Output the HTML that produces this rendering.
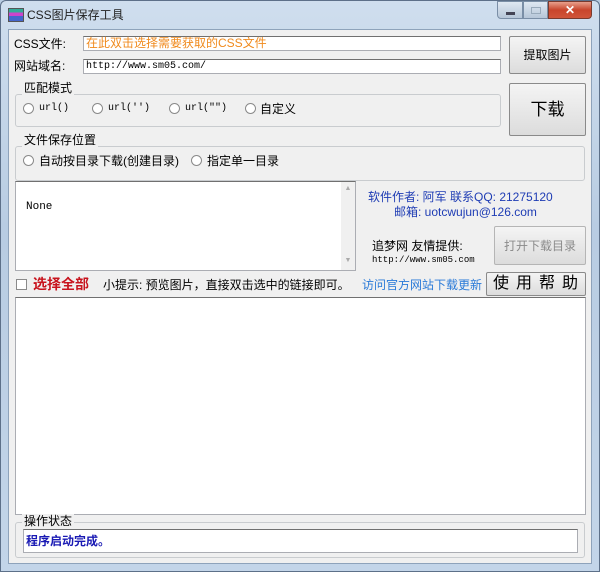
<!DOCTYPE html>
<html><head><meta charset="utf-8"><style>
*{margin:0;padding:0;box-sizing:border-box}
body{width:600px;height:572px;position:relative;overflow:hidden;font-family:"Liberation Sans","Noto Sans CJK SC",sans-serif;font-size:12px;color:#000;background:#b9cde3}
.a{position:absolute;line-height:14px}
.frame{left:0;top:0;width:600px;height:572px;background:linear-gradient(#cfdeee,#b8cce2 40%,#c3d5e9);border-radius:6px 6px 0 0;border:1px solid #5d7089}
.client{left:8px;top:29px;width:584px;height:535px;background:#f0f0f0;border:1px solid #8ea3bb}
.inp{background:#fff;border:1px solid #abadb3;border-top-color:#707070}
.btn{background:linear-gradient(#f4f4f4,#dcdcdc);border:1px solid #8a8a8a;border-radius:2px;display:flex;align-items:center;justify-content:center}
.grp{border:1px solid #c9cccf;border-radius:3px}
.gt{background:#f0f0f0;padding:0 2px;line-height:14px}
.rad{width:11px;height:11px;border:1px solid #8a8a8a;border-radius:50%;background:#fff}
.mono{font-family:"Liberation Mono",monospace;font-size:10px}
</style></head><body>
<div class="a frame"></div>
<div class="a" style="left:8px;top:8px;width:16px;height:14px;background:linear-gradient(#3a9 0 30%,#c4c 30% 60%,#46c 60%);border:1px solid #555"></div>
<div class="a" style="left:27px;top:8px;font-size:12px;color:#222">CSS图片保存工具</div>
<div class="a" style="left:497px;top:1px;width:26px;height:18px;background:linear-gradient(#dfe8f2,#b6c6d8);border:1px solid #7a8ea6;border-radius:0 0 0 4px"><div class="a" style="left:8px;top:10px;width:9px;height:3px;background:#445"></div></div>
<div class="a" style="left:523px;top:1px;width:25px;height:18px;background:linear-gradient(#dfe8f2,#b6c6d8);border:1px solid #7a8ea6"><div class="a" style="left:7px;top:5px;width:10px;height:7px;border:1px solid #9ab"></div></div>
<div class="a" style="left:548px;top:1px;width:44px;height:18px;background:linear-gradient(#e8a08c,#c8452c 50%,#d0553a);border:1px solid #7a3a2e;border-radius:0 0 4px 0;color:#fff;font-weight:bold;font-size:12px;text-align:center;line-height:16px">✕</div>

<div class="a client"></div>
<div class="a" style="left:14px;top:37px">CSS文件:</div>
<div class="a inp" style="left:83px;top:36px;width:418px;height:15px;color:#f08a1c;line-height:13px;padding-left:2px">在此双击选择需要获取的CSS文件</div>
<div class="a" style="left:14px;top:59px">网站域名:</div>
<div class="a inp mono" style="left:83px;top:59px;width:418px;height:15px;line-height:14px;padding-left:2px">http://www.sm05.com/</div>
<div class="a btn" style="left:509px;top:36px;width:77px;height:38px">提取图片</div>

<div class="a grp" style="left:15px;top:94px;width:486px;height:33px"></div>
<div class="a gt" style="left:22px;top:81px">匹配模式</div>
<div class="a rad" style="left:23px;top:103px"></div><div class="a mono" style="left:39px;top:102px">url()</div>
<div class="a rad" style="left:92px;top:103px"></div><div class="a mono" style="left:108px;top:102px">url('')</div>
<div class="a rad" style="left:169px;top:103px"></div><div class="a mono" style="left:185px;top:102px">url("")</div>
<div class="a rad" style="left:245px;top:103px"></div><div class="a" style="left:260px;top:102px">自定义</div>
<div class="a btn" style="left:509px;top:83px;width:77px;height:53px;font-size:17px">下载</div>

<div class="a grp" style="left:15px;top:146px;width:570px;height:35px"></div>
<div class="a gt" style="left:22px;top:133px">文件保存位置</div>
<div class="a rad" style="left:23px;top:155px"></div><div class="a" style="left:39px;top:154px">自动按目录下载(创建目录)</div>
<div class="a rad" style="left:191px;top:155px"></div><div class="a" style="left:207px;top:154px">指定单一目录</div>

<div class="a inp" style="left:15px;top:181px;width:341px;height:90px"></div>
<div class="a" style="left:341px;top:182px;width:14px;height:88px;background:#f0f0f0;color:#aaa;font-size:7px;text-align:center">▲<div style="position:absolute;bottom:2px;width:14px">▼</div></div>
<div class="a mono" style="left:26px;top:200px;font-size:11px">None</div>
<div class="a" style="left:368px;top:190px;color:#1e3cb4">软件作者: 阿军 联系QQ: 21275120</div>
<div class="a" style="left:394px;top:205px;color:#1e3cb4">邮箱: uotcwujun@126.com</div>
<div class="a" style="left:372px;top:239px;font-size:12px">追梦网 友情提供:</div>
<div class="a mono" style="left:372px;top:253px;font-size:9px">http://www.sm05.com</div>
<div class="a btn" style="left:494px;top:226px;width:92px;height:39px;color:#8a8a8a;border-color:#b5b5b5">打开下载目录</div>

<div class="a" style="left:16px;top:279px;width:11px;height:11px;border:1px solid #8a8a8a;background:#fff"></div>
<div class="a" style="left:33px;top:277px;color:#c8141e;font-weight:bold;font-size:14px">选择全部</div>
<div class="a" style="left:103px;top:278px">小提示: 预览图片，直接双击选中的链接即可。</div>
<div class="a" style="left:362px;top:278px;color:#2a7ad8">访问官方网站下载更新</div>
<div class="a btn" style="left:486px;top:272px;width:100px;height:24px;font-size:16px;letter-spacing:7px;padding-left:6px">使用帮助</div>

<div class="a inp" style="left:15px;top:297px;width:571px;height:218px"></div>

<div class="a grp" style="left:15px;top:522px;width:570px;height:36px"></div>
<div class="a gt" style="left:22px;top:514px">操作状态</div>
<div class="a inp" style="left:23px;top:529px;width:555px;height:24px;color:#1a1ab4;font-weight:bold;line-height:22px;padding-left:2px">程序启动完成。</div>
</body></html>
